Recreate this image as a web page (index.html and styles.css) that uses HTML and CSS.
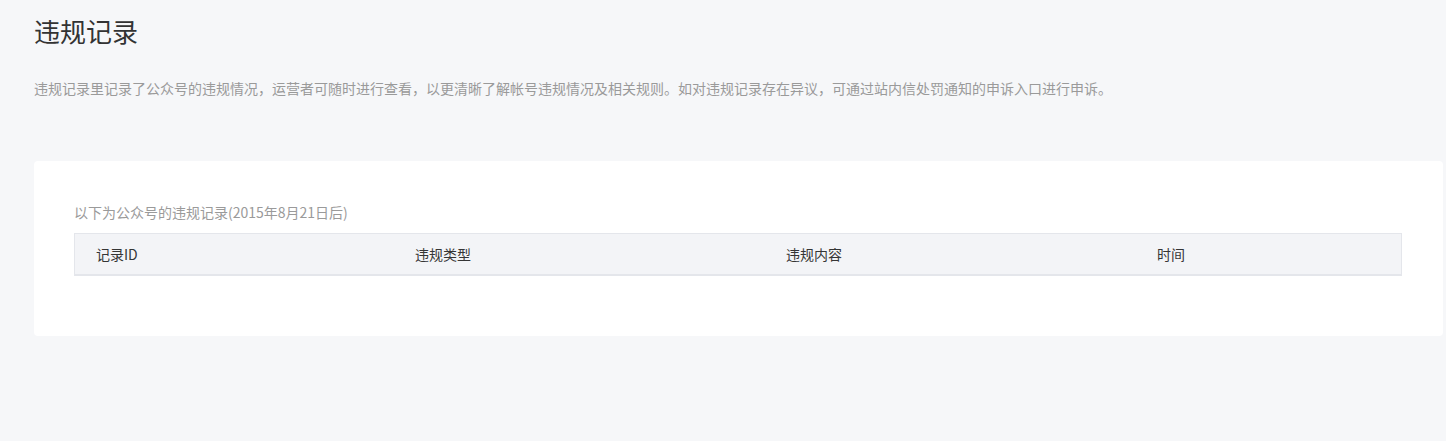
FILE: index.html
```
<!DOCTYPE html>
<html lang="zh-CN">
  <head>
    <meta charset="UTF-8" />
    <meta name="viewport" content="width=device-width, initial-scale=1.0" />
    <title>违规记录</title>
    <link rel="stylesheet" href="styles.css">
  </head>
  <body>
    <main class="page">
      <h1 class="page-title">违规记录</h1>
      <p class="page-desc">违规记录里记录了公众号的违规情况，运营者可随时进行查看，以更清晰了解帐号违规情况及相关规则。如对违规记录存在异议，可通过站内信处罚通知的申诉入口进行申诉。</p>

      <section class="card">
        <p class="card-tips">以下为公众号的违规记录(2015年8月21日后)</p>
        <table class="record-table">
          <colgroup>
            <col class="col-id" />
            <col class="col-type" />
            <col class="col-content" />
            <col />
          </colgroup>
          <thead>
            <tr>
              <th>记录ID</th>
              <th>违规类型</th>
              <th>违规内容</th>
              <th>时间</th>
            </tr>
          </thead>
          <tbody id="records"></tbody>
        </table>
      </section>
    </main>
  </body>
</html>
```

FILE: styles.css
```
body {
  margin: 0;
  padding: 0;
  font-family: "Noto Sans CJK SC", "Liberation Sans", sans-serif;
  background-color: #f6f7f9;
  color: #353535;
}

.page {
  padding: 13px 3px 40px 34px;
}

.page-title {
  margin: 0;
  font-size: 26px;
  line-height: 36px;
  font-weight: normal;
  color: #333;
}

.page-desc {
  margin: 29px 0 63px;
  font-size: 14px;
  line-height: 20px;
  color: #9a9a9a;
}

.card {
  background-color: #fff;
  border-radius: 4px;
  padding: 41px 41px 60px 40px;
}

.card-tips {
  margin: 0 0 11px;
  font-size: 14px;
  line-height: 20px;
  color: #9a9a9a;
}

.record-table {
  width: 100%;
  table-layout: fixed;
  border-collapse: separate;
  border-spacing: 0;
  background-color: #f3f4f7;
  border: 1px solid #e4e6eb;
  border-bottom-width: 2px;
}

.col-id {
  width: 319px;
}

.col-type,
.col-content {
  width: 371px;
}

.record-table th {
  height: 40px;
  padding: 0 0 0 21px;
  font-size: 14px;
  font-weight: normal;
  text-align: left;
  color: #353535;
}
```
